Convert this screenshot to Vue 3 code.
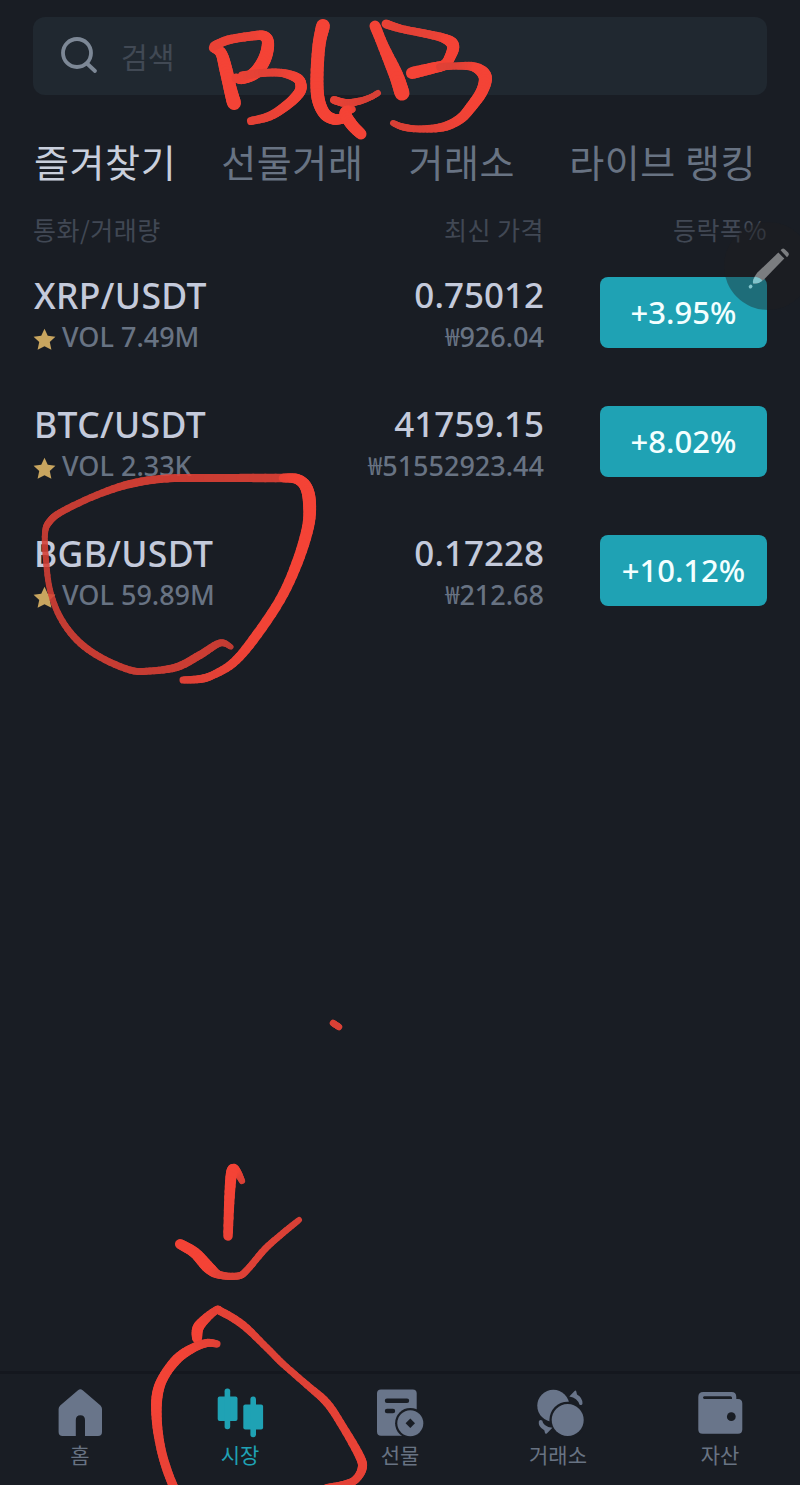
<template>
  <div class="market">
    <div class="search">
      <svg class="search-icon" viewBox="0 0 38 38">
        <circle cx="16" cy="16" r="14" />
        <path d="M26 26.5 L34 34" />
      </svg>
      <span>검색</span>
    </div>

    <nav class="tabs">
      <a v-for="tab in tabs" :key="tab" :class="{ active: tab === activeTab }" @click="activeTab = tab">{{ tab }}</a>
    </nav>

    <div class="row head">
      <span>통화/거래량</span>
      <span class="right">최신 가격</span>
      <span class="right">등락폭%</span>
    </div>

    <div v-for="coin in coins" :key="coin.pair" class="row coin">
      <div>
        <div class="main-text pair">{{ coin.pair }}</div>
        <div class="sub-text">
          <svg class="star" viewBox="0 0 24 24">
            <path d="M12 .8 L15.4 8.2 L23.4 9.1 L17.5 14.6 L19.2 22.8 L12 19 L4.8 22.8 L6.5 14.6 L.6 9.1 L8.6 8.2 Z" />
          </svg>
          <span>VOL {{ coin.volume }}</span>
        </div>
      </div>
      <div class="right">
        <div class="main-text">{{ coin.price }}</div>
        <div class="sub-text"><span class="won">₩</span>{{ coin.krw }}</div>
      </div>
      <div class="change">{{ coin.change }}</div>
    </div>

    <footer class="bottom-nav">
      <a class="nav-item">
        <svg viewBox="0 0 48 50">
          <path d="M22 2.2 Q24.3 .3 26.7 2.2 L44.5 17.5 Q46 19 46 21 V44 Q46 48 42 48 H29 V32 Q29 27.3 24.4 27.3 Q19.8 27.3 19.8 32 V48 H6.6 Q2.6 48 2.6 44 V21 Q2.6 19 4.2 17.5 Z" />
        </svg>
        <span>홈</span>
      </a>
      <a class="nav-item current">
        <svg viewBox="0 0 48 50">
          <rect x="1.7" y="8.5" width="19.8" height="24.6" rx="2" />
          <rect x="8.6" y=".6" width="5.6" height="40.6" rx="2.6" />
          <rect x="27.3" y="16.4" width="19.8" height="25" rx="2" />
          <rect x="34.4" y="8.6" width="5.6" height="40.6" rx="2.6" />
        </svg>
        <span>시장</span>
      </a>
      <a class="nav-item">
        <svg viewBox="0 0 48 50">
          <rect x="1" y="1.6" width="39.7" height="46.2" rx="4" />
          <path class="cut-line" d="M11 12.7 H31 M11 23 H17" />
          <circle class="cut" cx="34.3" cy="35.3" r="15.2" />
          <circle cx="34.3" cy="35.3" r="13" />
          <path class="cut" d="M34.3 30.6 L39 35.3 L34.3 40 L29.6 35.3 Z" />
        </svg>
        <span>선물</span>
      </a>
      <a class="nav-item">
        <svg viewBox="0 0 48 50">
          <circle cx="17.3" cy="17.7" r="16" />
          <circle class="cut" cx="31.7" cy="32" r="18.3" />
          <circle cx="31.7" cy="32" r="16" />
          <path d="M33.3 8.6 L38.6 2.9 Q39.8 2 40.3 3.4 L41 6.4 Q46.8 9.8 46.5 15.6 Q46 18 43.4 16.6 Q41.6 10.2 33.3 8.6 Z" />
          <path d="M2.8 33.5 Q3.4 31 6.2 32.4 Q7.2 38.6 16.4 39.8 L10.8 45.4 Q9.4 46.4 9 45 L8.3 42.2 Q2 39 2.8 33.5 Z" />
        </svg>
        <span class="exchange">거래소</span>
      </a>
      <a class="nav-item">
        <svg viewBox="0 0 48 50">
          <path fill-rule="evenodd" d="M7.3 4 H35.5 Q40.3 4 40.3 9 V11 H42 Q46.3 11 46.3 15.5 V41.5 Q46.3 45.7 42 45.7 H6.6 Q2.3 45.7 2.3 41.5 V9 Q2.3 4 7.3 4 Z M8.3 8.3 Q7 8.6 7 9.6 Q7 10.9 8.3 10.9 H36 V9.8 Q36 8.3 34.5 8.3 Z" />
          <circle class="cut" cx="35.3" cy="28.7" r="4.4" />
        </svg>
        <span>자산</span>
      </a>
    </footer>

    <!-- floating pen button -->
    <div class="pen">
      <svg viewBox="0 0 88 88">
        <path d="M54.3 30.6 L60.3 36.4 L40 57.4 Q34 62.4 29.2 61.4 Q28.4 57 33.4 50.6 Z" />
        <path d="M56.6 28.2 Q58.6 25.4 61 27.4 L64.4 30.8 Q65.6 33 63 35.2 Z" />
        <path class="nib-top" d="M29.4 57.4 Q28.4 60 29.2 61.4 Q34 62.4 38.4 58.8 Q36 55.4 30.8 54.8 Z" />
        <path class="nib" d="M26.8 64.4 L26.4 64.8" />
      </svg>
    </div>

    <!-- pen marks drawn on top of the screen -->
    <svg class="ink" viewBox="0 0 800 1485">
      <g v-for="(stroke, i) in ink" :key="i" :opacity="stroke.opacity">
        <line v-for="(s, j) in stroke.segments" :key="j" :x1="s.x1" :y1="s.y1" :x2="s.x2" :y2="s.y2" :stroke-width="s.w" :stroke="s.color" />
      </g>
    </svg>
  </div>
</template>

<script setup>
import { ref } from 'vue'

const tabs = ['즐겨찾기', '선물거래', '거래소', '라이브 랭킹']
const activeTab = ref('즐겨찾기')

const coins = [
  { pair: 'XRP/USDT', volume: '7.49M', price: '0.75012', krw: '926.04', change: '+3.95%' },
  { pair: 'BTC/USDT', volume: '2.33K', price: '41759.15', krw: '51552923.44', change: '+8.02%' },
  { pair: 'BGB/USDT', volume: '59.89M', price: '0.17228', krw: '212.68', change: '+10.12%' }
]

// every point is [x, y, pen width]
const strokes = [
  { points: [[213, 48, 8], [221, 53, 11], [226, 70, 13], [230, 88, 13], [234, 103, 14]] },
  { points: [[214, 46, 9], [228, 40, 9], [252, 36, 9], [264, 36, 10], [268, 43, 12], [265, 58, 13], [256, 72, 13], [243, 79, 10], [236, 78, 9]] },
  { points: [[242, 76, 9], [262, 73, 8], [282, 73, 8], [297, 78, 10], [301, 85, 11], [299, 93, 11], [287, 105, 10], [270, 116, 9], [251, 121, 8]] },
  { points: [[323, 26, 14], [319, 45, 13], [317, 75, 13], [318, 98, 13], [324, 113, 12], [333, 119, 11], [342, 119, 10]] },
  { points: [[334, 100, 8], [346, 103, 8], [360, 101, 7], [371, 97, 6], [378, 93, 6]] },
  { points: [[352, 109, 7], [345, 113, 11], [352, 125, 12], [361, 134, 11]] },
  { points: [[375, 26, 11], [384, 48, 11], [396, 75, 14], [402, 93, 15]] },
  { points: [[386, 24, 9], [402, 29, 8], [422, 33, 8], [443, 38, 9], [453, 45, 12], [450, 57, 11], [444, 65, 10], [433, 68, 11], [412, 73, 12]] },
  { points: [[440, 67, 8], [456, 66, 7], [474, 67, 9], [485, 76, 13], [482, 91, 12], [471, 107, 11], [460, 119, 10], [443, 127, 9], [420, 129, 7], [403, 127, 7], [393, 123, 6]] },
  {
    opacity: 0.88,
    points: [[231, 647, 5], [220, 643, 7], [200, 655, 8], [177, 667, 8], [150, 671, 7], [130, 670, 7], [100, 657, 7], [77, 640, 7], [60, 617, 6.5], [50, 590, 6], [46, 560, 6], [45, 533, 6], [50, 521, 7], [63, 511, 7], [97, 495, 7], [130, 484, 8], [167, 478.5, 8], [217, 478, 8], [283, 478, 8.5]]
  },
  { points: [[283, 478, 8.5], [297, 479, 10], [306, 487, 12], [309.5, 503, 13], [308, 527, 12], [297, 563, 11], [280, 600, 10], [253, 640, 10], [233, 663, 9], [213, 675, 8], [200, 679, 8], [183, 680, 7]] },
  { points: [[333, 1023, 6.5], [339, 1027, 6.5]] },
  { points: [[242, 1181, 6], [237, 1172, 8], [232, 1171, 11], [229.5, 1197, 10.5], [228, 1236, 9.5]] },
  { points: [[180, 1244, 10], [195, 1253, 11], [209, 1268, 12], [220, 1275, 8], [238, 1276, 7], [247, 1270, 7], [265, 1249, 7], [283, 1233, 6.5], [299, 1220, 6]] },
  { points: [[197, 1338, 10], [199, 1326, 11], [215, 1311, 8], [222, 1312, 8], [243, 1325, 8], [267, 1348, 7], [283, 1364, 7], [307, 1385, 7], [327, 1403, 8], [343, 1427, 8], [360, 1457, 9], [362, 1469, 9], [355, 1480, 8], [343, 1485, 8], [327, 1488, 8]] },
  { points: [[217, 1344, 7], [207, 1343, 8], [193, 1348, 9], [177, 1359, 10], [163, 1378, 10], [157, 1397, 11], [157, 1423, 10], [161, 1449, 9], [167, 1470, 9], [174, 1488, 9]] }
]

// a lighter press leaves a thinner, darker red
const inkColor = (w) => {
  const t = Math.min(1, Math.max(0, (w - 5.5) / 5))
  return `rgb(${Math.round(212 + 32 * t)}, ${Math.round(64 + 3 * t)}, 54)`
}

const spline = (a, b, c, d, t) =>
  0.5 * (2 * b + (c - a) * t + (2 * a - 5 * b + 4 * c - d) * t * t + (3 * b - a - 3 * c + d) * t * t * t)

const smooth = (points) => {
  const steps = 6
  const out = []
  for (let i = 0; i < points.length - 1; i++) {
    const p0 = points[i - 1] || points[i]
    const p1 = points[i]
    const p2 = points[i + 1]
    const p3 = points[i + 2] || p2
    for (let k = 0; k < steps; k++) {
      out.push([0, 1, 2].map((n) => spline(p0[n], p1[n], p2[n], p3[n], k / steps)))
    }
  }
  out.push(points[points.length - 1])
  return out
}

const ink = strokes.map(({ points, opacity = 1 }) => {
  const pts = smooth(points)
  const segments = pts.slice(1).map((p, i) => ({
    x1: pts[i][0],
    y1: pts[i][1],
    x2: p[0],
    y2: p[1],
    w: p[2],
    color: inkColor(p[2])
  }))
  return { opacity, segments }
})
</script>

<style>
body {
  margin: 0;
  background: #191d24;
}
</style>

<style scoped>
.market {
  position: relative;
  display: flex;
  flex-direction: column;
  box-sizing: border-box;
  width: 800px;
  height: 1485px;
  padding-top: 17px;
  overflow: hidden;
  background: #191d24;
  color: #c4cadb;
  font-family: "Noto Sans", "Noto Sans CJK KR", sans-serif;
}

.search {
  display: flex;
  align-items: center;
  gap: 22px;
  box-sizing: border-box;
  height: 78px;
  margin: 0 33px;
  padding-left: 28px;
  border-radius: 12px;
  background: #202830;
  color: #414954;
  font-family: "Noto Sans CJK KR", sans-serif;
  font-size: 29px;
}

.search-icon {
  width: 38px;
  height: 38px;
  fill: none;
  stroke: #7d8896;
  stroke-width: 3.8;
  stroke-linecap: round;
}

.tabs {
  display: flex;
  align-items: center;
  height: 56px;
  margin: 38px 0 0 34px;
  color: #687383;
  font-family: "Noto Sans CJK KR", sans-serif;
  font-size: 38px;
  letter-spacing: 0.6px;
  line-height: 56px;
  white-space: nowrap;
}

.tabs a {
  margin-right: 45px;
}

.tabs a:nth-child(3) {
  margin-right: 54px;
}

.tabs .active {
  color: #c9cfdc;
}

.row {
  display: grid;
  grid-template-columns: 240px 271px 56px 167px;
  margin: 0 33px;
}

.row > :nth-child(3) {
  grid-column: 4;
}

.right {
  text-align: right;
}

.head {
  height: 36px;
  margin-top: 23px;
  color: #414854;
  font-family: "Noto Sans CJK KR", sans-serif;
  font-size: 25px;
  letter-spacing: 0.5px;
  line-height: 34px;
}

.coin {
  height: 71px;
  margin-top: 58px;
}

.head + .coin {
  margin-top: 29px;
}

.main-text {
  height: 38px;
  font-size: 35px;
  font-weight: 500;
  line-height: 36px;
  white-space: nowrap;
}

.pair {
  padding-left: 1px;
  font-size: 35.5px;
  letter-spacing: 0.35px;
}

.sub-text {
  display: flex;
  align-items: center;
  height: 44px;
  color: #687383;
  font-size: 27px;
  font-weight: 500;
  line-height: 44px;
  white-space: nowrap;
}

.right .sub-text {
  justify-content: flex-end;
}

.won {
  padding-bottom: 4px;
  font-family: "Noto Sans CJK KR", sans-serif;
  font-size: 25px;
  font-weight: 400;
}

.star {
  width: 23px;
  height: 23px;
  margin: 4px 6px 0 0;
  fill: #c8a55f;
}

.change {
  height: 71px;
  border-radius: 8px;
  background: #1fa2b4;
  color: #f3ffff;
  font-size: 31px;
  font-weight: 500;
  line-height: 71px;
  text-align: center;
}

.bottom-nav {
  display: grid;
  grid-template-columns: repeat(5, 160px);
  box-sizing: border-box;
  height: 114px;
  margin-top: auto;
  border-top: 3px solid #14171e;
}

.nav-item {
  display: flex;
  flex-direction: column;
  align-items: center;
  padding-top: 14px;
  color: #687383;
  font-family: "Noto Sans CJK KR", sans-serif;
  font-size: 21px;
  line-height: 32px;
}

.nav-item svg {
  width: 48px;
  height: 50px;
  fill: #69758a;
}

.nav-item.current {
  color: #1fa2b4;
}

.nav-item.current svg {
  fill: #1fa2b4;
}

.nav-item .exchange {
  padding-right: 4px;
}

.nav-item .cut {
  fill: #191d24;
}

.nav-item .cut-line {
  fill: none;
  stroke: #191d24;
  stroke-width: 4.4;
  stroke-linecap: round;
}

.pen {
  position: absolute;
  top: 222px;
  left: 724px;
  width: 88px;
  height: 88px;
  border-radius: 50%;
  background: rgba(31, 31, 33, 0.4);
}

.pen svg {
  display: block;
  fill: #7b7d80;
}

.pen .nib-top {
  fill: #80c4cc;
}

.pen .nib {
  stroke: #80c4cc;
  stroke-width: 3.4;
  stroke-linecap: round;
}

.ink {
  position: absolute;
  top: 0;
  left: 0;
  width: 800px;
  height: 1485px;
  pointer-events: none;
  stroke-linecap: round;
}
</style>
